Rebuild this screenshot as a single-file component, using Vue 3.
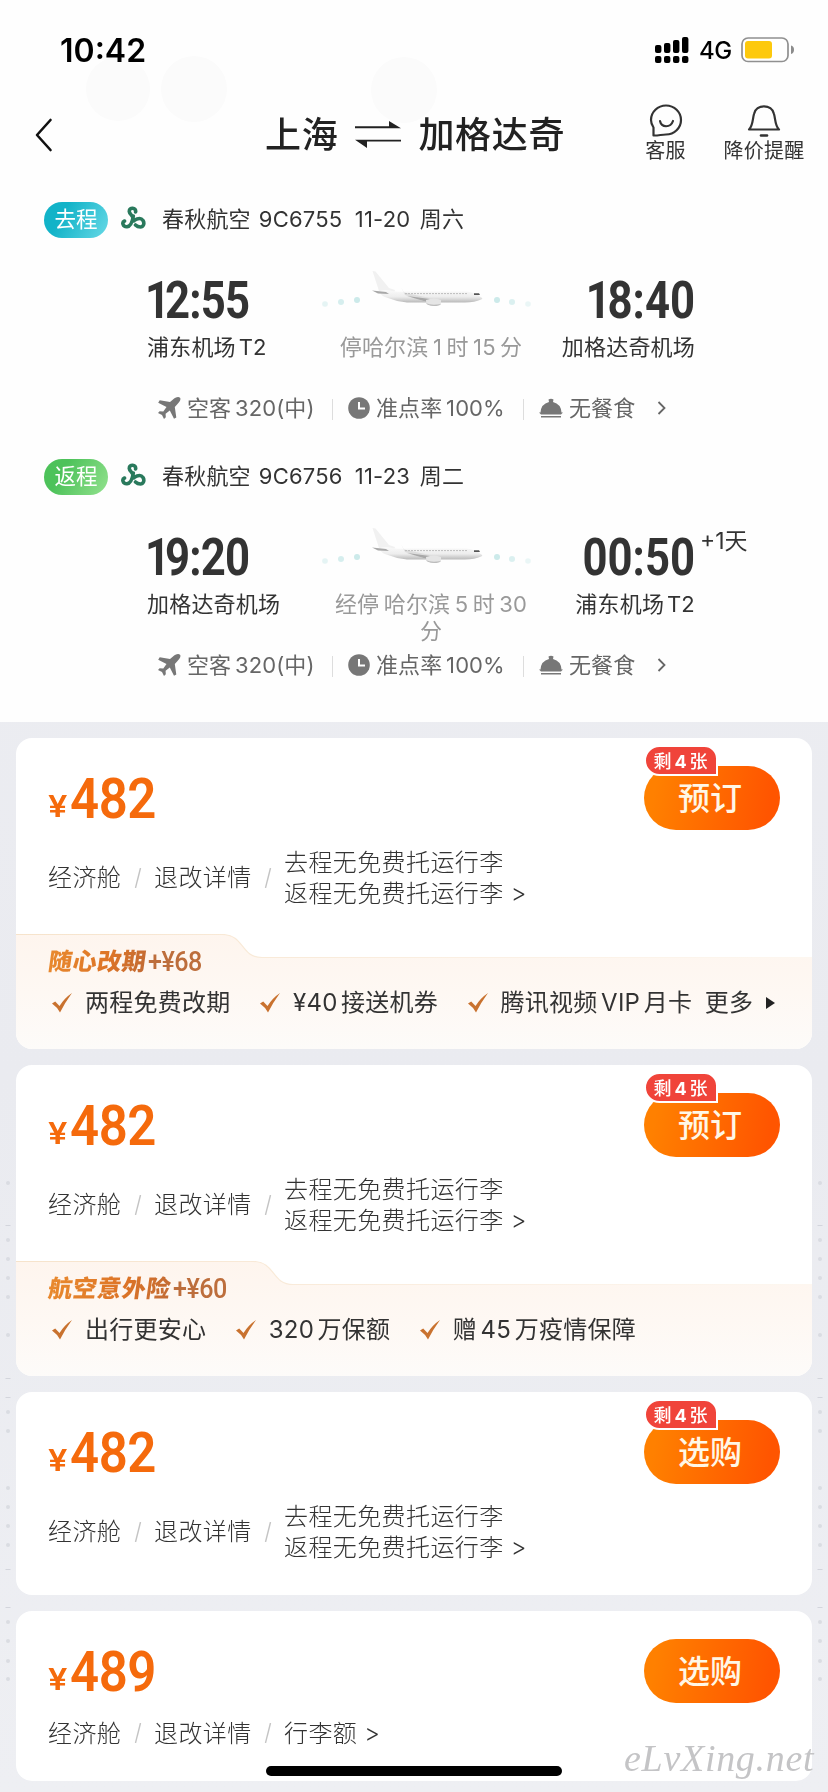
<script setup>
const legs = [
  {
    kind: 'out', tag: '去程', flight: '9C6755', date: '11-20', day: '周六',
    depTime: '12:55', depPlace: '浦东机场 T2', via: '停哈尔滨 1 时 15 分',
    arrTime: '18:40', arrPlace: '加格达奇机场', plus: ''
  },
  {
    kind: 'home', tag: '返程', flight: '9C6756', date: '11-23', day: '周二',
    depTime: '19:20', depPlace: '加格达奇机场', via: '经停 哈尔滨 5 时 30', viaRest: '分',
    arrTime: '00:50', arrPlace: '浦东机场 T2', plus: '+1天'
  }
]
const both = ['去程无免费托运行李', '返程无免费托运行李 >']
const fares = [
  {
    price: 482, action: '预订', left: 4, bag: both,
    promo: { name: '随心改期', add: '+¥68', tab: 206, items: ['两程免费改期', '¥40 接送机券', '腾讯视频 VIP 月卡'], more: true }
  },
  {
    price: 482, action: '预订', left: 4, bag: both,
    promo: { name: '航空意外险', add: '+¥60', tab: 237, items: ['出行更安心', '320 万保额', '赠 45 万疫情保障'], more: false }
  },
  { price: 482, action: '选购', left: 4, bag: both },
  { price: 489, action: '选购', bag: ['行李额 >'] }
]
const tabPath = (t) => `M0 .5H${t}C${t + 23} .5 ${t + 18} 23.5 ${t + 40} 23.5H796`
const dots = [1183, 1240, 1259, 1278, 1297, 1335, 1412, 1431, 1488, 1507, 1526, 1545, 1622, 1641, 1661, 1679]
const dashes = [1225, 1378, 1397, 1569, 1607]
</script>

<template>
  <div class="page">
    <svg class="haze" width="828" height="180" viewBox="0 0 828 180" fill="#fcfcfc">
      <circle cx="118" cy="89" r="32" /><circle cx="194" cy="89" r="33" /><circle cx="404" cy="90" r="33" />
    </svg>
    <svg class="marks" width="828" height="1792" viewBox="0 0 828 1792">
      <g v-for="x in [8, 820]" :key="x" :transform="`translate(${x} 0)`">
        <circle v-for="y in dots" :key="y" cx="0" :cy="y" r="2" fill="#dadce2" />
        <rect v-for="y in dashes" :key="y" x="-2.5" :y="y" width="5" height="1" fill="#d3d5dc" />
      </g>
    </svg>

    <section class="top">
      <div class="status">
        <span class="clock">10:42</span>
        <span class="sys">
          <svg class="signal" width="34" height="27" viewBox="0 0 34 27">
            <rect x="0" y="8" width="6.4" height="8" rx="2" /><rect x="9" y="6" width="6.4" height="10" rx="2" />
            <rect x="18" y="3" width="6.4" height="13" rx="2" /><rect x="27" y="0" width="6.4" height="16" rx="2" />
            <rect v-for="x in [0, 9, 18, 27]" :key="x" :x="x" y="19" width="6.4" height="7" rx="2" />
          </svg>
          <span class="net">4G</span>
          <svg width="54" height="26" viewBox="0 0 54 26">
            <rect x="1" y="1" width="46" height="23.5" rx="6" fill="#fff" stroke="#909090" stroke-width="1.7" />
            <rect x="4" y="4" width="27" height="17.5" rx="3" fill="#fdc90d" />
            <path d="M50 8.500q3 .7 3 4.200t-3 4.200z" fill="#8c8c8c" />
          </svg>
        </span>
      </div>

      <header class="nav">
        <svg class="back" width="18" height="34" viewBox="0 0 18 34"><path d="M15.500 2 2 17l13.500 15" fill="none" stroke="#111" stroke-width="2.600" stroke-linecap="round" stroke-linejoin="round" /></svg>
        <h1>
          <span>上海</span>
          <svg width="46" height="28" viewBox="0 0 46 28" fill="#222"><path d="M0 5.200H34V0L46 7.200H0zM46 20.500H12V27L0 18.700H46z" /></svg>
          <span>加格达奇</span>
        </h1>
        <div class="tool service">
          <svg width="34" height="34" viewBox="0 0 34 34" fill="none" stroke="#333" stroke-width="2.200" stroke-linecap="round" stroke-linejoin="round"><path d="M4.500 31.500V23.500C2.800 21 2 18.800 2 16A15 14.500 0 1 1 17 30.500C13 30.500 9 31.700 4.500 31.500ZM11 17c1.500 7 10.500 7 13 0" /></svg>
          <span>客服</span>
        </div>
        <div class="tool alert">
          <svg width="34" height="34" viewBox="0 0 34 34" fill="none" stroke="#333" stroke-width="2.200" stroke-linecap="round" stroke-linejoin="round"><path d="M2 25.500C6 22 5.500 15 7 10 9-.2 25-.2 27 10c1.500 5 1 12 5 15.500Z" /><path d="M14 31.500h6" stroke-width="2.600" /></svg>
          <span>降价提醒</span>
        </div>
      </header>

      <article v-for="leg in legs" :key="leg.kind" class="leg">
        <div class="head">
          <span class="tag" :class="leg.kind">{{ leg.tag }}</span>
          <svg class="spring" width="26" height="25" viewBox="0 0 26 25" fill="none" stroke="#29795c" stroke-linecap="round">
            <path d="M14.600 6C15.500 1.200 8 .8 8.300 5.600 8.500 8.500 13 10 13 15M12.300 10C11.500 15 9.500 20.500 6 20.800 1.500 21 .8 16 3.500 15M13 14.500C17 12 20 11.500 22 14.500 24 18 22 21 19.500 21 17.500 21 16 20.500 14.500 19" stroke-width="3.600" />
          </svg>
          <span class="line"><span>春秋航空</span><span class="no">{{ leg.flight }}</span><span class="date">{{ leg.date }}</span><span>{{ leg.day }}</span></span>
        </div>
        <div class="route">
          <div class="end">
            <b><i><u v-for="(c, k) in leg.depTime" :key="k" :class="{ one: c === '1' }">{{ c }}</u></i></b>
            <span>{{ leg.depPlace }}</span>
          </div>
          <div class="mid">
            <svg width="210" height="50" viewBox="0 0 210 50">
              <defs>
                <linearGradient :id="'b' + leg.kind" x2="0" y2="1"><stop offset="0" stop-color="#fafafa" /><stop offset=".55" stop-color="#ededed" /><stop offset="1" stop-color="#b9b9b9" /></linearGradient>
              </defs>
              <g fill="#cceaea"><circle cx="8" cy="35" r="2.800" opacity=".5" /><circle cx="24" cy="33" r="3" opacity=".8" /><circle cx="40" cy="31" r="3" /><circle cx="180" cy="31" r="3" /><circle cx="195" cy="33" r="3" opacity=".7" /><circle cx="211" cy="35" r="2.800" opacity=".4" /></g>
              <path d="M55.500 2l3 .5L72 19l6 2-2 5-14-4z" fill="#f1f1f1" />
              <path d="M63 22C70 19 75 24 90 22.500H149Q157 23 163 27.500 167 29.500 164 30.500 158 33.500 148 33.500H90Q79 32.500 68 28Q63 26 63 22Z" :fill="`url(#b${leg.kind})`" />
              <path d="M55 21.500l14 1.500 3 2-11-.5z" fill="#a8a8a8" />
              <path d="M84 18l3 5.500 28 6 7 3.500-12 .3L88 26z" fill="#ddd" /><path d="M90 27l20 6 12 0-9-3z" fill="#a8a8a8" />
              <path d="M88 24.600H150" stroke="#bdbdbd" stroke-width="1" stroke-dasharray="2 1" />
              <path d="M109 31q8-3 15 0v4q-2 2-7 2-9-1-8-6z" fill="#e5e5e5" /><path d="M109 34q5 3 15 1-2 2-7 2-7-.5-8-3z" fill="#bcbcbc" />
              <path d="M157 24.300h5l1 1.700h-6z" fill="#555" />
            </svg>
            <span>{{ leg.via }}<em v-if="leg.viaRest">{{ leg.viaRest }}</em></span>
          </div>
          <div class="end right">
            <b><i><u v-for="(c, k) in leg.arrTime" :key="k" :class="{ one: c === '1' }">{{ c }}</u></i></b>
            <span>{{ leg.arrPlace }}</span>
            <sup v-if="leg.plus">{{ leg.plus }}</sup>
          </div>
        </div>
        <div class="info">
          <span class="cell craft">
            <svg width="23" height="22" viewBox="0 0 23 22" fill="#777"><path d="M22 .8c1.300 1.500-.5 4.200-2.500 6.200L16.800 10l1.500 10.500-2.300 1.300-4.200-8.300-4.200 3.300.2 3.500L6 22l-2-4-4-2 1.600-1.800 3.700.2 3.200-4.300L.2 5.800 1.700 3.300 12 5l3-2.500C17 .5 20.500-.9 22 .8z" /></svg>
            <span>空客 320(中)</span>
          </span>
          <span class="cell ontime">
            <svg width="22" height="22" viewBox="0 0 22 22"><circle cx="11" cy="11" r="10.800" fill="#777" /><path d="M11 5v6.500h6" fill="none" stroke="#fff" stroke-width="2" /></svg>
            <span>准点率 100%</span>
          </span>
          <span class="cell meal">
            <svg width="24" height="21" viewBox="0 0 24 21" fill="#777"><path d="M9.500 1.500q2.500-1.500 5 0L14 4q8 2 8.500 10.500H24L22 16.500H2L0 14.500H1.500Q2 6 10 4zM2 18h20v1.600H2z" /></svg>
            <span>无餐食</span>
          </span>
          <svg class="go" width="9" height="14" viewBox="0 0 9 14"><path d="M1.500 1 7.500 7l-6 6" fill="none" stroke="#666" stroke-width="1.800" /></svg>
        </div>
      </article>
    </section>

    <main class="fares">
      <article v-for="(f, i) in fares" :key="i" class="card">
        <div class="buy">
          <span class="price"><small>¥</small><b>{{ f.price }}</b></span>
          <button>{{ f.action }}<span v-if="f.left" class="badge">剩<b>{{ f.left }}</b>张</span></button>
        </div>
        <div class="terms" :class="{ single: f.bag.length === 1, last: !f.promo }">
          <span class="cabin">经济舱</span>
          <svg width="8" height="20" viewBox="0 0 8 20"><path d="M6.500 0 1.500 20" stroke="#c4c4c4" stroke-width="1.400" /></svg>
          <span class="rules">退改详情</span>
          <svg width="8" height="20" viewBox="0 0 8 20"><path d="M6.500 0 1.500 20" stroke="#c4c4c4" stroke-width="1.400" /></svg>
          <span class="bags"><span v-for="b in f.bag" :key="b">{{ b }}</span></span>
        </div>
        <div v-if="f.promo" class="promo">
          <svg class="sheet" width="796" height="115" viewBox="0 0 796 115">
            <defs>
              <linearGradient :id="'s' + i" x2="0" y2="1"><stop offset="0" stop-color="#fef5ee" /><stop offset=".5" stop-color="#fef8f3" /><stop offset="1" stop-color="#fdfbf9" /></linearGradient>
              <linearGradient :id="'l' + i"><stop offset="0" stop-color="#f6e3cb" /><stop offset=".6" stop-color="#fbf0e4" /><stop offset="1" stop-color="#fdf7f0" /></linearGradient>
            </defs>
            <path :d="tabPath(f.promo.tab) + 'V115H0Z'" :fill="`url(#s${i})`" />
            <path :d="tabPath(f.promo.tab)" fill="none" :stroke="`url(#l${i})`" stroke-width="1.200" />
          </svg>
          <div class="ptitle"><strong>{{ f.promo.name }}</strong><span>{{ f.promo.add }}</span></div>
          <div class="perks">
            <span v-for="p in f.promo.items" :key="p" class="perk">
              <svg width="20" height="20" viewBox="0 0 20 20"><path d="M0 10.500 3.200 8.500 7.500 13Q12.500 5 20 0 13 9.500 8 19.500Q5 14 0 10.500Z" fill="#c9722f" /></svg>
              <span>{{ p }}</span>
            </span>
            <span v-if="f.promo.more" class="more">更多<svg width="9" height="12" viewBox="0 0 9 12"><path d="M0 0 9 6 0 12z" fill="#222" /></svg></span>
          </div>
        </div>
      </article>
    </main>

    <div class="home-bar"></div>
    <div class="mark">eLvXing.net</div>
  </div>
</template>

<style>
body { background: #edeef2; }
</style>

<style scoped>
* { box-sizing: border-box; }
i, em { font-style: normal; }
u { text-decoration: none; }
.page { position: relative; width: 828px; height: 1792px; overflow: hidden; background: linear-gradient(#eeeff3, #eaebf0 60%, #eeeff3); font-family: Inter, "Noto Sans CJK SC", sans-serif; color: #333; font-size: 22px; white-space: nowrap; }
.top { height: 722px; background: #fefefe; }
.haze { position: absolute; left: 0; top: 0; mix-blend-mode: multiply; }
.marks { position: absolute; left: 0; top: 0; }

.status { height: 98px; padding: 2px 33px 0 60px; display: flex; justify-content: space-between; align-items: center; color: #000; }
.clock { font-size: 32px; font-weight: 600; line-height: 40px; letter-spacing: 0; margin-top: 2px; }
.sys { display: flex; align-items: center; }
.signal { margin: 1px 10px 0 0; }
.net { font-size: 24px; font-weight: 500; line-height: 26px; width: 42px; margin-top: 2px; letter-spacing: -.6px; }

.nav { height: 82px; display: grid; grid-template-columns: 265px 379px 60px 124px; }
.back { margin: 20px 0 0 35px; }
h1 { margin: 10px 0 0; font-size: 36px; line-height: 54px; font-weight: 500; color: #222; display: flex; letter-spacing: .7px; }
h1 svg { margin: 13px 17px 0 17px; }
.tool { display: flex; flex-direction: column; align-items: center; font-size: 20px; line-height: 24px; padding-top: 6px; letter-spacing: .2px; }
.tool span { margin-top: 1px; }
.service { width: 43px; }
.alert { width: 120px; }

.leg { height: 257px; position: relative; }
.head { height: 60px; padding: 22px 0 0 44px; display: flex; }
.tag { width: 64px; height: 36px; border-radius: 18px; color: #fff; font-size: 21.500px; line-height: 35px; text-align: center; }
.out { background: linear-gradient(120deg, #12b3c8 30%, #67d9e6); }
.home { background: linear-gradient(120deg, #4dc25a 30%, #93e28e); }
.spring { margin: 4px 0 0 13px; }
.line { margin-left: 15px; display: flex; line-height: 34px; font-size: 22px; letter-spacing: .2px; }
.no { margin-left: 8px; width: 96px; }
.date { width: 65px; }
.route { display: grid; grid-template-columns: 168px 210px 170px; padding-left: 147px; height: 146px; }
.end { position: relative; display: flex; flex-direction: column; align-items: flex-start; padding-top: 31px; color: #333; }
.end b { font: 700 52px/60px Roboto, sans-serif; height: 60px; margin-bottom: -1px; }
.end b i { display: inline-block; transform: scaleX(.84); transform-origin: 0 50%; letter-spacing: -1px; margin-left: -2px; }
.end b .one { letter-spacing: -6px; }
.right { align-items: flex-end; }
.end.right b i { transform-origin: 100% 50%; letter-spacing: 0; }
.end.right b .one { letter-spacing: -4px; }
.end span { line-height: 34px; letter-spacing: .2px; word-spacing: -3.500px; }
.end sup { position: absolute; left: 175px; top: 29px; font-size: 23px; line-height: 30px; }
.mid { display: flex; flex-direction: column; align-items: center; padding-top: 29px; color: #999; }
.mid svg { overflow: visible; height: 50px; flex: none; margin-left: 3px; }
.mid span { margin: 15px 0 0 22px; line-height: 27px; text-align: center; word-spacing: -2px; letter-spacing: .2px; }
.mid em { display: block; }
.info { position: absolute; left: 158px; top: 214px; display: flex; height: 28px; align-items: center; font-size: 22px; color: #666; line-height: 28px; word-spacing: -2.500px; letter-spacing: .1px; }
.cell { display: flex; align-items: center; gap: 6px; }
.cell svg { flex: none; }
.craft, .ontime { position: relative; }
.craft { width: 190px; }
.ontime { width: 191px; }
.craft::after, .ontime::after { content: ""; position: absolute; right: 15px; top: 5px; width: 1px; height: 21px; background: #ddd; }
.meal { width: 118px; }

.fares { position: relative; display: flex; flex-direction: column; gap: 16px; padding: 16px; }
.card { background: #fff; border-radius: 16px; overflow: hidden; }
.buy { height: 110px; padding: 28px 32px 0 32px; display: flex; justify-content: space-between; }
.price { display: flex; align-items: baseline; color: #f56a0c; padding-top: 1px; line-height: 65px; }
.price small { font: 600 30px/60px Inter, sans-serif; width: 22px; transform: scaleX(1.15) translateY(-1px); transform-origin: 0 50%; }
.price b { font: 600 56px/65px Roboto, sans-serif; letter-spacing: -.5px; transform: scaleX(.91); transform-origin: 0 50%; }
button { position: relative; width: 136px; height: 64px; border: 0; border-radius: 32px; padding: 1px 4px 0 0; background: linear-gradient(100deg, #ff8000 10%, #ff5500 90%); color: #fff7e6; font: 500 32px/62px Inter, "Noto Sans CJK SC", sans-serif; }
.badge { position: absolute; left: 0; top: -21px; width: 74px; height: 31px; border: 2px solid #fff; border-radius: 16px 14px 0 16px; background: #f0443a; color: #fff; font-size: 18px; line-height: 29px; display: flex; justify-content: center; gap: 3px; padding-right: 1px; }
.badge b { font-weight: 700; }
.terms { height: 86px; padding-left: 32px; display: flex; align-items: flex-start; font-size: 24px; line-height: 31px; font-weight: 300; letter-spacing: .4px; }
.terms.last { height: 93px; }
.terms.single { height: 60px; }
.cabin, .rules { padding-top: 14px; }
.cabin { width: 86px; }
.rules { width: 110px; }
.terms svg { margin: 20px 12px 0 0; width: 8px; }
.bags { display: flex; flex-direction: column; margin-top: -1px; }
.single .cabin, .single .rules { padding-top: 0; }
.single .bags { margin-top: 0; }
.terms.single svg { margin-top: 5px; }
.single { position: relative; top: -3px; }
.promo { position: relative; height: 115px; }
.sheet { position: absolute; left: 0; top: 0; }
.ptitle { position: relative; height: 50px; padding: 11px 0 0 32px; display: flex; line-height: 34px; }
.ptitle strong { font-size: 24px; font-weight: 900; letter-spacing: .5px; background: linear-gradient(100deg, #e98a2e, #dd7426 60%, #c06a35); background-clip: text; -webkit-background-clip: text; color: transparent; transform: skewX(-8deg); }
.ptitle span { font: 500 27px/35px Roboto, sans-serif; color: #bd6e3c; transform: scaleX(.93); transform-origin: 0 50%; letter-spacing: -.6px; margin-left: 2px; }
.perks { position: relative; display: flex; padding: 1px 0 0 36px; font-size: 24px; line-height: 36px; letter-spacing: .25px; word-spacing: -3.500px; color: #333; }
.perk { display: flex; align-items: center; gap: 13px; margin-right: 29.500px; }
.more { display: flex; align-items: center; gap: 13px; margin-left: -17px; }

.home-bar { position: absolute; left: 266px; top: 1766px; width: 296px; height: 10px; border-radius: 5px; background: #000; }
.mark { position: absolute; left: 624px; top: 1738px; font: italic 38px/40px "Liberation Serif", serif; letter-spacing: .7px; color: #c4c4c6; }
</style>
